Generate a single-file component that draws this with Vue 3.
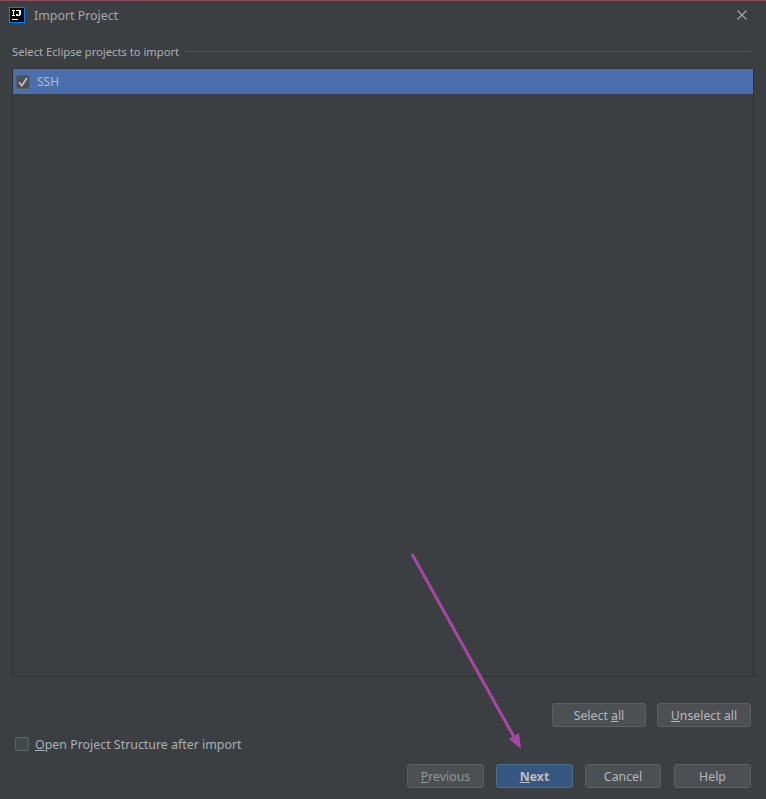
<template>
  <div class="dialog">
    <!-- title bar -->
    <div class="titlebar">
      <svg class="logo" width="16" height="16" viewBox="0 0 16 16">
        <rect x="0.5" y="0.5" width="15" height="15" fill="#000" stroke="#087cfa" />
        <rect x="3" y="3" width="3" height="1" fill="#fff" />
        <rect x="4" y="4" width="1" height="4" fill="#fff" />
        <rect x="3" y="8" width="3" height="1" fill="#fff" />
        <rect x="7" y="3" width="5" height="1" fill="#fff" />
        <rect x="10" y="4" width="2" height="4" fill="#fff" />
        <rect x="7" y="7" width="2" height="2" fill="#fff" />
        <rect x="8" y="8" width="3" height="1" fill="#fff" />
        <rect x="3" y="12" width="6" height="1" fill="#fff" />
      </svg>
      <span class="title">Import Project</span>
      <svg class="close" width="10" height="10" viewBox="0 0 10 10">
        <path d="M0.5 0.5L9.5 9.5M9.5 0.5L0.5 9.5" stroke="#a9a9a9" stroke-width="1.1" fill="none" />
      </svg>
    </div>

    <div class="content">
      <div class="group-title">
        <span>Select Eclipse projects to import</span>
        <div class="group-line"></div>
      </div>

      <div class="list">
        <div v-for="item in projects" :key="item" class="list-row">
          <span class="check checked">
            <svg width="10" height="10" viewBox="0 0 10 10">
              <path d="M1 5.2L3.8 8.6L9 1" stroke="#b9bdc0" stroke-width="1.8" fill="none" />
            </svg>
          </span>
          <span class="row-text">{{ item }}</span>
        </div>
      </div>

      <div class="select-buttons">
        <div class="btn btn-wide">Select <u>a</u>ll</div>
        <div class="btn btn-wide"><u>U</u>nselect all</div>
      </div>

      <label class="open-structure">
        <span class="check"></span>
        <span><u>O</u>pen Project Structure after import</span>
      </label>

      <div class="footer">
        <div class="btn btn-prev"><u>P</u>revious</div>
        <div class="btn btn-next"><u>N</u>ext</div>
        <div class="btn btn-cancel">Cancel</div>
        <div class="btn btn-help">Help</div>
      </div>
    </div>

    <!-- annotation arrow -->
    <svg class="arrow" width="766" height="799" viewBox="0 0 766 799">
      <line x1="412" y1="554" x2="514" y2="737" stroke="#a846a6" stroke-width="3" />
      <polygon points="521,749 509,739 519,733" fill="#a846a6" />
    </svg>
  </div>
</template>

<script setup>
const projects = ['SSH']
</script>

<style>
html, body {
  margin: 0;
  background: #3c3f41;
}
</style>

<style scoped>
.dialog {
  position: relative;
  width: 766px;
  height: 799px;
  box-sizing: border-box;
  background: #3c3f41;
  border-top: 1px solid #8a4b5c;
  color: #a9b0b4;
  font-family: "Noto Sans", "Open Sans", sans-serif;
  font-size: 12.5px;
  overflow: hidden;
}
.titlebar {
  display: flex;
  align-items: center;
  height: 28px;
  padding: 0 19px 0 9px;
}
.logo {
  flex: none;
  margin-right: 9px;
}
.title {
  flex: 1;
  color: #a3a8ab;
  font-size: 12.4px;
}
.close {
  flex: none;
}
.content {
  padding: 0 12px;
}
.group-title {
  display: flex;
  align-items: center;
  gap: 6px;
  box-sizing: border-box;
  height: 39px;
  padding-top: 6px;
  margin-right: 3px;
  font-size: 11.2px;
}
.group-line {
  flex: 1;
  height: 1px;
  background: #515557;
}
.list {
  box-sizing: border-box;
  width: 742px;
  height: 609px;
  border: 1px solid #2f3133;
}
.list-row {
  display: flex;
  align-items: center;
  height: 25px;
  padding-left: 3px;
  background: #4b6eaf;
}
.check {
  flex: none;
  display: flex;
  align-items: center;
  justify-content: center;
  box-sizing: border-box;
  width: 14px;
  height: 14px;
  border: 1px solid #646668;
  border-radius: 2px;
  background: #43494a;
}
.check.checked {
  background: #4a5056;
  border-color: #5a5f63;
}
.row-text {
  margin-left: 7px;
  color: #b0bccc;
  font-size: 12px;
}
.select-buttons {
  display: flex;
  justify-content: flex-end;
  gap: 11px;
  margin-top: 26px;
  padding-right: 3px;
}
.btn {
  box-sizing: border-box;
  height: 24px;
  line-height: 24px;
  text-align: center;
  border: 1px solid #5e6060;
  border-radius: 3px;
  background: #4c5052;
  color: #b4b8bb;
  font-size: 12.3px;
}
.btn-wide {
  width: 94px;
}
.open-structure {
  display: flex;
  align-items: center;
  gap: 6px;
  height: 14px;
  margin-top: 10px;
  padding-left: 3px;
  font-size: 12.4px;
}
.footer {
  display: flex;
  justify-content: flex-end;
  margin-top: 13px;
  padding-right: 3px;
}
.btn-prev {
  width: 77px;
  color: #93979a;
}
.btn-next {
  width: 77px;
  margin-left: 12px;
  background: #365880;
  border-color: #4c708c;
  color: #bbbfc2;
  font-weight: 700;
}
.btn-cancel {
  width: 76px;
  margin-left: 12px;
}
.btn-help {
  width: 77px;
  margin-left: 13px;
}
.arrow {
  position: absolute;
  left: 0;
  top: -1px;
  pointer-events: none;
}
</style>
